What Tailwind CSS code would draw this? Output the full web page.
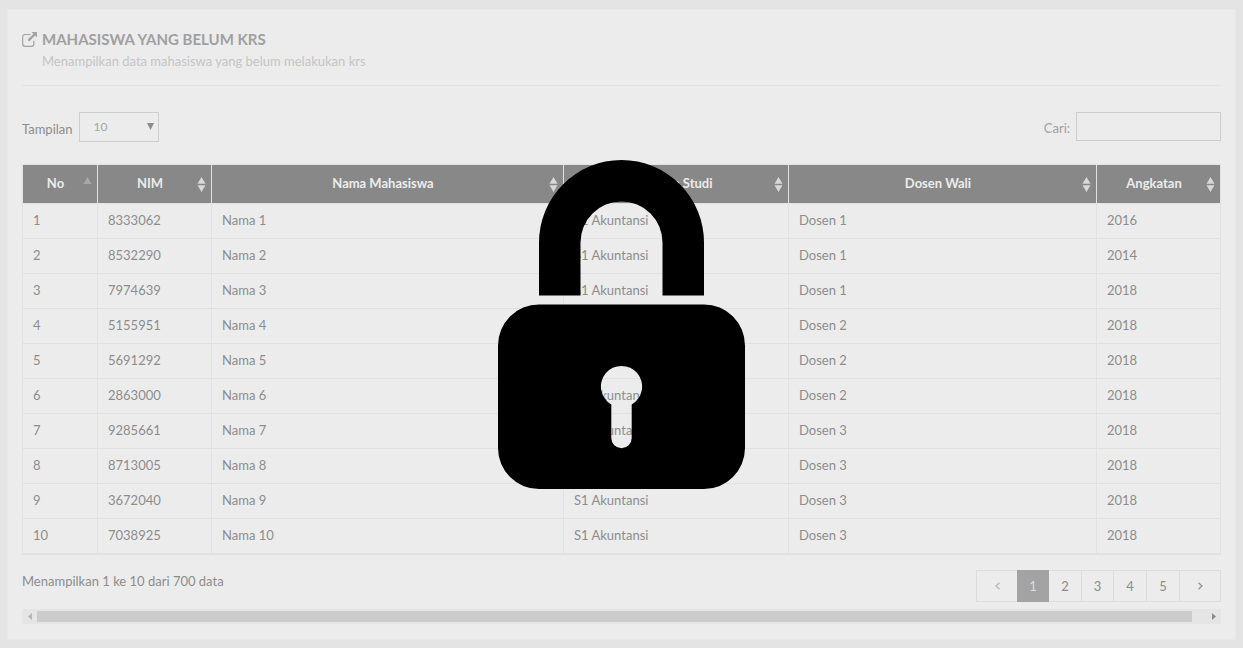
<!DOCTYPE html>
<html lang="id">
<head>
<meta charset="utf-8">
<title>Mahasiswa yang belum KRS</title>
<script src="https://cdn.jsdelivr.net/npm/@tailwindcss/browser@4"></script>
</head>
<body class="min-h-screen bg-[#e4e4e4] px-[7px] py-[9px] font-[Lato,sans-serif] text-[13px] leading-5 text-[#8c8c8c]">
<main class="border border-[#e8e8e8] bg-[#ececec] px-[14px] pt-[18px] pb-[15px]">
  <header class="flex gap-[5px] border-b border-[#e3e3e3] pb-[13px]">
    <svg class="mt-1 h-[15px] w-[15px] shrink-0" viewBox="0 0 15 15" fill="none" aria-hidden="true">
      <path d="M8.500 2.500H3A2.300 2.300 0 0 0 .7 4.800V12A2.300 2.300 0 0 0 3 14.300H9.500A2.300 2.300 0 0 0 11.800 12V8.800" stroke="#a3a3a3" stroke-width="1.200"/>
      <path d="M9.500 0H15V5.500L13.100 3.600 7.200 9.500 5.500 7.800 11.400 1.900Z" fill="#a3a3a3"/>
    </svg>
    <div>
      <h1 class="text-[15px] leading-[22px] font-bold text-[#a0a0a0]">MAHASISWA YANG BELUM KRS</h1>
      <p class="leading-[22px] text-[#c5c5c5]">Menampilkan data mahasiswa yang belum melakukan krs</p>
    </div>
  </header>

  <div class="mt-[26px] flex items-start justify-between">
    <div class="flex items-center gap-[6px]">
      <label for="len" class="pt-1">Tampilan</label>
      <div class="relative">
        <select id="len" class="block h-[30px] w-20 appearance-none border border-[#cecece] bg-transparent pl-[14px] text-xs text-[#a5a5a5]"><option>10</option><option>25</option><option>50</option></select>
        <svg class="pointer-events-none absolute top-[11px] right-[5px] h-[7px] w-[7px]" viewBox="0 0 7 7" aria-hidden="true"><path d="M0 0H7L3.500 7Z" fill="#8c8c8c"/></svg>
      </div>
    </div>
    <div class="flex items-center gap-[6px]">
      <label for="q" class="pt-[3px] text-[#a0a0a0]">Cari:</label>
      <input id="q" type="search" class="h-[29px] w-[145px] border border-[#cecece] bg-transparent px-2">
    </div>
  </div>

  <svg class="hidden" aria-hidden="true"><symbol id="sort" viewBox="0 0 9 15"><path d="M4.500 0 8.500 6.700H.5ZM.5 8.200H8.500L4.500 15Z" fill="#d8d8d8"/></symbol></svg>
  <table class="mt-[22px] w-full table-fixed border-collapse border border-b-2 border-[#e1e1e1]">
    <thead>
      <tr class="h-[39px] bg-[#888888] text-[#ececec] [&_th]:pb-[2px] [&_svg]:mt-1">
        <th class="w-[75px] border-r border-[#e1e1e1] px-[5px] font-bold"><div class="flex"><span class="flex-1">No</span><svg class="h-[7px] w-[9px]" viewBox="0 0 9 7" aria-hidden="true"><path d="M4.500 0 8.500 7H.5Z" fill="#a7a7a7"/></svg></div></th>
        <th class="w-[114px] border-r border-[#e1e1e1] px-[5px] font-bold"><div class="flex"><span class="flex-1">NIM</span><svg class="h-[15px] w-[9px]" aria-hidden="true"><use href="#sort"/></svg></div></th>
        <th class="w-[352px] border-r border-[#e1e1e1] px-[5px] font-bold"><div class="flex"><span class="flex-1">Nama Mahasiswa</span><svg class="h-[15px] w-[9px]" aria-hidden="true"><use href="#sort"/></svg></div></th>
        <th class="w-[225px] border-r border-[#e1e1e1] px-[5px] font-bold"><div class="flex"><span class="flex-1">Program Studi</span><svg class="h-[15px] w-[9px]" aria-hidden="true"><use href="#sort"/></svg></div></th>
        <th class="w-[308px] border-r border-[#e1e1e1] px-[5px] font-bold"><div class="flex"><span class="flex-1">Dosen Wali</span><svg class="h-[15px] w-[9px]" aria-hidden="true"><use href="#sort"/></svg></div></th>
        <th class="w-[124px] px-[5px] font-bold"><div class="flex"><span class="flex-1">Angkatan</span><svg class="h-[15px] w-[9px]" aria-hidden="true"><use href="#sort"/></svg></div></th>
      </tr>
    </thead>
    <tbody class="[&_td]:border [&_td]:border-[#e1e1e1] [&_td]:px-[10px] [&_td]:pb-[2px] [&_tr]:h-[35px]">
      <tr><td>1</td><td>8333062</td><td>Nama 1</td><td>S1 Akuntansi</td><td>Dosen 1</td><td>2016</td></tr>
      <tr><td>2</td><td>8532290</td><td>Nama 2</td><td>S1 Akuntansi</td><td>Dosen 1</td><td>2014</td></tr>
      <tr><td>3</td><td>7974639</td><td>Nama 3</td><td>S1 Akuntansi</td><td>Dosen 1</td><td>2018</td></tr>
      <tr><td>4</td><td>5155951</td><td>Nama 4</td><td>S1 Akuntansi</td><td>Dosen 2</td><td>2018</td></tr>
      <tr><td>5</td><td>5691292</td><td>Nama 5</td><td>S1 Akuntansi</td><td>Dosen 2</td><td>2018</td></tr>
      <tr><td>6</td><td>2863000</td><td>Nama 6</td><td>S1 Akuntansi</td><td>Dosen 2</td><td>2018</td></tr>
      <tr><td>7</td><td>9285661</td><td>Nama 7</td><td>S1 Akuntansi</td><td>Dosen 3</td><td>2018</td></tr>
      <tr><td>8</td><td>8713005</td><td>Nama 8</td><td>S1 Akuntansi</td><td>Dosen 3</td><td>2018</td></tr>
      <tr><td>9</td><td>3672040</td><td>Nama 9</td><td>S1 Akuntansi</td><td>Dosen 3</td><td>2018</td></tr>
      <tr><td>10</td><td>7038925</td><td>Nama 10</td><td>S1 Akuntansi</td><td>Dosen 3</td><td>2018</td></tr>
    </tbody>
  </table>

  <div class="mt-[15px] flex items-start justify-between">
    <p class="mt-px">Menampilkan 1 ke 10 dari 700 data</p>
    <nav aria-label="Halaman" class="flex h-8 border border-[#dcdcdc]">
      <button class="grid w-10 place-items-center" aria-label="Sebelumnya"><svg class="h-2 w-[5px]" viewBox="0 0 5 8" fill="none" stroke="#b5b5b5" stroke-width="1.200"><path d="M4.500.8 1 4 4.500 7.200"/></svg></button>
      <button class="-my-px w-8 bg-[#a3a3a3] text-[#dcdcdc]" aria-current="page">1</button>
      <button class="w-[33px] border-r border-[#dcdcdc]">2</button>
      <button class="w-8 border-r border-[#dcdcdc]">3</button>
      <button class="w-[33px] border-r border-[#dcdcdc]">4</button>
      <button class="w-[33px] border-r border-[#dcdcdc]">5</button>
      <button class="grid w-10 place-items-center" aria-label="Berikutnya"><svg class="h-2 w-[5px]" viewBox="0 0 5 8" fill="none" stroke="#8f8f8f" stroke-width="1.200"><path d="M.5.8 4 4 .5 7.200"/></svg></button>
    </nav>
  </div>

  <div class="mt-[7px] flex h-[15px] items-center bg-[#e5e5e5]">
    <button class="grid w-[15px] place-items-center" aria-label="Gulir ke kiri"><svg class="h-[7px] w-1" viewBox="0 0 4 7"><path d="M4 0V7L0 3.500Z" fill="#b5b5b5"/></svg></button>
    <div class="flex-1 pr-[14px]"><div class="h-[11px] bg-[#cccccc]"></div></div>
    <button class="grid w-[15px] place-items-center" aria-label="Gulir ke kanan"><svg class="h-[7px] w-1" viewBox="0 0 4 7"><path d="M0 0V7L4 3.500Z" fill="#8c8c8c"/></svg></button>
  </div>
</main>

<div class="pointer-events-none fixed inset-0 flex items-center justify-center">
  <svg class="h-[329px] w-[247px]" viewBox="0 0 247 329" role="img" aria-label="Terkunci">
    <path d="M41 135.500V82.500a82.500 82.500 0 0 1 165 0v53h-41.500V82.500a41 41 0 0 0-82 0v53Z"/>
    <path fill-rule="evenodd" d="M41 144.500H206a41 41 0 0 1 41 41V288a41 41 0 0 1-41 41H41a41 41 0 0 1-41-41V185.500a41 41 0 0 1 41-41ZM113.300 244.400V278a10.200 10.200 0 0 0 20.400 0V244.400a20.600 20.600 0 1 0-20.400 0Z"/>
  </svg>
</div>
</body>
</html>
